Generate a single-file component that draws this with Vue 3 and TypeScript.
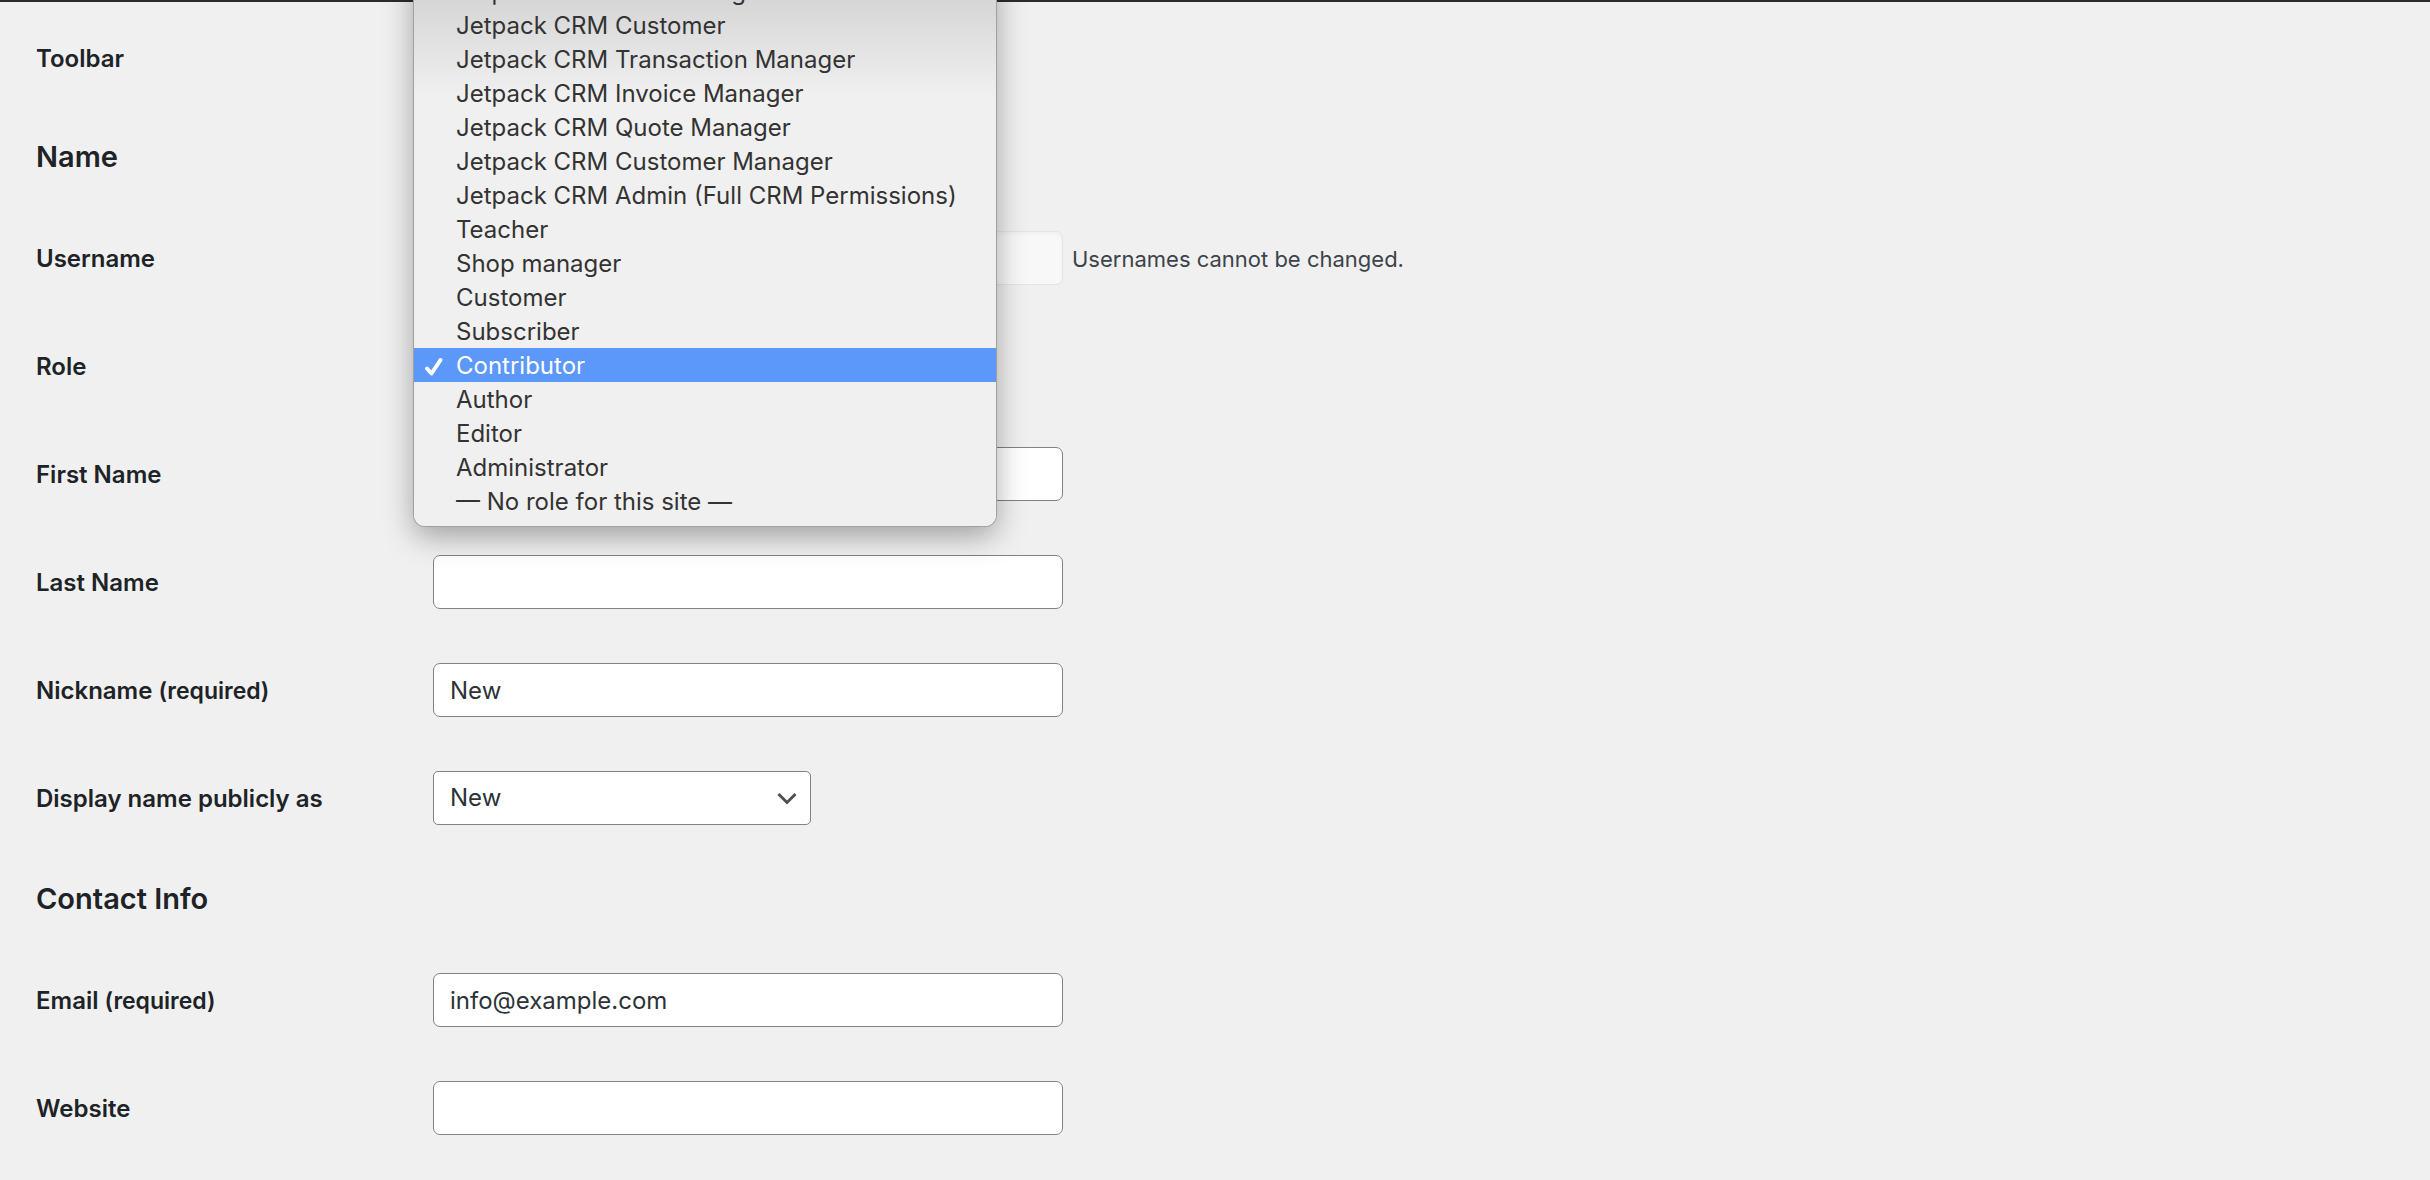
<script setup lang="ts">
import { ref } from 'vue'

const roles: string[] = [
  'Jetpack CRM Mail Manager',
  'Jetpack CRM Customer',
  'Jetpack CRM Transaction Manager',
  'Jetpack CRM Invoice Manager',
  'Jetpack CRM Quote Manager',
  'Jetpack CRM Customer Manager',
  'Jetpack CRM Admin (Full CRM Permissions)',
  'Teacher',
  'Shop manager',
  'Customer',
  'Subscriber',
  'Contributor',
  'Author',
  'Editor',
  'Administrator',
  '— No role for this site —',
]

const role = ref('Contributor')
const firstName = ref('')
const lastName = ref('')
const nickname = ref('New')
const displayName = ref('New')
const email = ref('info@example.com')
const website = ref('')
</script>

<template>
  <form class="profile" @submit.prevent>
    <div class="row toolbar">
      <span class="label">Toolbar</span>
    </div>

    <h2>Name</h2>

    <div class="row">
      <label class="label" for="username">Username</label>
      <div class="field">
        <input id="username" class="text" type="text" disabled />
        <span class="description">Usernames cannot be changed.</span>
      </div>
    </div>

    <div class="row">
      <label class="label" for="role">Role</label>
      <div class="field role">
        <select id="role" v-model="role" class="role-select">
          <option v-for="name in roles" :key="name">{{ name }}</option>
        </select>
        <ul class="menu" role="listbox" aria-label="Role">
          <li
            v-for="name in roles"
            :key="name"
            role="option"
            class="item"
            :class="{ selected: name === role }"
            :aria-selected="name === role"
            @click="role = name"
          >
            <span class="tick">
              <svg v-if="name === role" viewBox="0 0 20 24" width="20" height="24" aria-hidden="true">
                <path d="M3 14.5 7.5 19.5 16.5 6" />
              </svg>
            </span>
            <span>{{ name }}</span>
          </li>
        </ul>
      </div>
    </div>

    <div class="row">
      <label class="label" for="first">First Name</label>
      <div class="field"><input id="first" v-model="firstName" class="text" type="text" /></div>
    </div>

    <div class="row">
      <label class="label" for="last">Last Name</label>
      <div class="field"><input id="last" v-model="lastName" class="text" type="text" /></div>
    </div>

    <div class="row">
      <label class="label" for="nickname">Nickname <span class="required">(required)</span></label>
      <div class="field"><input id="nickname" v-model="nickname" class="text" type="text" /></div>
    </div>

    <div class="row">
      <label class="label" for="display">Display name publicly as</label>
      <div class="field">
        <div class="select-wrap">
          <select id="display" v-model="displayName">
            <option>New</option>
          </select>
          <svg class="chevron" viewBox="0 0 20 14" width="20" height="14" aria-hidden="true">
            <path d="M1.5 2 10 10.5 18.5 2" />
          </svg>
        </div>
      </div>
    </div>

    <h2>Contact Info</h2>

    <div class="row">
      <label class="label" for="email">Email <span class="required">(required)</span></label>
      <div class="field"><input id="email" v-model="email" class="text" type="email" /></div>
    </div>

    <div class="row">
      <label class="label" for="website">Website</label>
      <div class="field"><input id="website" v-model="website" class="text" type="url" /></div>
    </div>
  </form>
</template>

<style>
body {
  background: #f0f0f0;
}
</style>

<style scoped>
.profile {
  box-sizing: border-box;
  min-height: 100vh;
  padding: 4px 36px 16px;
  border-top: 2px solid #2c2b2b;
  font-family: Inter, "Liberation Sans", sans-serif;
  font-size: 24px;
  line-height: 32px;
  color: #1d2327;
}

.row {
  display: grid;
  grid-template-columns: 397px minmax(0, 1fr);
  align-items: center;
  min-height: 108px;
}

.label {
  padding-top: 2px;
  font-weight: 600;
}

.required {
  font-size: 23px;
}

h2 {
  margin: 0;
  padding: 27px 0;
  font-size: 29px;
  font-weight: 600;
  line-height: 40px;
}

.row.toolbar {
  min-height: 104px;
}

.field {
  display: flex;
  align-items: center;
  gap: 9px;
}

.text,
select {
  box-sizing: border-box;
  height: 54px;
  margin: 0;
  padding: 0 16px;
  border: 1px solid #7f8287;
  border-radius: 7px;
  background: #fff;
  color: #2c3338;
  font: inherit;
  appearance: none;
}

.text {
  width: 630px;
}

.text:disabled {
  border-color: #e3e4e5;
  background: #f8f8f8;
  box-shadow: inset 0 2px 4px rgba(0, 0, 0, 0.04);
}

.description {
  padding-top: 2px;
  color: #3c434a;
  font-size: 22px;
}

.select-wrap {
  position: relative;
}

.select-wrap select {
  width: 378px;
  border-radius: 5px;
}

.chevron {
  position: absolute;
  top: 21px;
  right: 14px;
  fill: none;
  stroke: #505050;
  stroke-width: 3;
  pointer-events: none;
}

.role {
  position: relative;
}

.role-select {
  width: 564px;
  border-color: #2271b1;
}

.menu {
  position: absolute;
  z-index: 1;
  bottom: -133px;
  left: -19px;
  box-sizing: border-box;
  width: 582px;
  margin: 0;
  padding: 8px 0;
  border-radius: 0 0 11px 11px;
  background: linear-gradient(#d6d6d6 34px, #f0f0f0 130px);
  box-shadow:
    0 0 0 1px #a0a0a0,
    0 10px 30px rgba(0, 0, 0, 0.34);
  color: #333;
  list-style: none;
}

.item {
  display: flex;
  align-items: center;
  box-sizing: border-box;
  height: 34px;
  padding-top: 2px;
  line-height: 32px;
  white-space: nowrap;
}

.item.selected {
  background: #5b98f9;
  color: #fff;
}

.tick {
  display: flex;
  flex: none;
  width: 32px;
  padding-left: 10px;
}

.tick path {
  fill: none;
  stroke: currentColor;
  stroke-width: 4;
  stroke-linecap: round;
  stroke-linejoin: round;
}
</style>
